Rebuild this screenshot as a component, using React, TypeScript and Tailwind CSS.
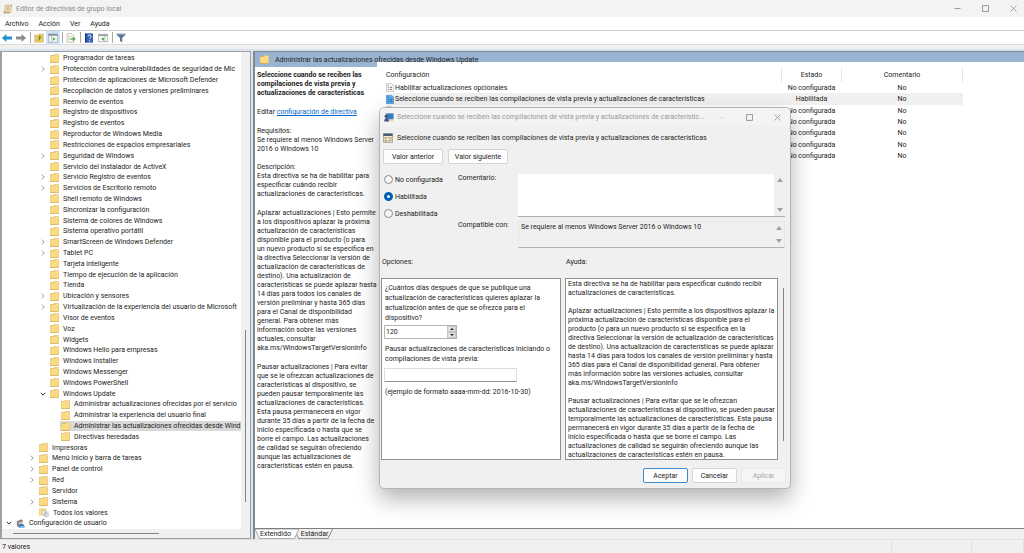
import type { ReactNode } from 'react';

interface TreeItem {
  label: string;
  level: 0 | 1 | 2 | 3;
  state?: 'open' | 'closed';
  icon?: 'folder' | 'all' | 'user';
  selected?: boolean;
}

const treeItems: TreeItem[] = [
  { label: 'Programador de tareas', level: 2 },
  { label: 'Protección contra vulnerabilidades de seguridad de Mic', level: 2, state: 'closed' },
  { label: 'Protección de aplicaciones de Microsoft Defender', level: 2 },
  { label: 'Recopilación de datos y versiones preliminares', level: 2 },
  { label: 'Reenvío de eventos', level: 2 },
  { label: 'Registro de dispositivos', level: 2 },
  { label: 'Registro de eventos', level: 2 },
  { label: 'Reproductor de Windows Media', level: 2 },
  { label: 'Restricciones de espacios empresariales', level: 2 },
  { label: 'Seguridad de Windows', level: 2, state: 'closed' },
  { label: 'Servicio del instalador de ActiveX', level: 2 },
  { label: 'Servicio Registro de eventos', level: 2, state: 'closed' },
  { label: 'Servicios de Escritorio remoto', level: 2, state: 'closed' },
  { label: 'Shell remoto de Windows', level: 2 },
  { label: 'Sincronizar la configuración', level: 2 },
  { label: 'Sistema de colores de Windows', level: 2 },
  { label: 'Sistema operativo portátil', level: 2 },
  { label: 'SmartScreen de Windows Defender', level: 2, state: 'closed' },
  { label: 'Tablet PC', level: 2, state: 'closed' },
  { label: 'Tarjeta inteligente', level: 2 },
  { label: 'Tiempo de ejecución de la aplicación', level: 2 },
  { label: 'Tienda', level: 2 },
  { label: 'Ubicación y sensores', level: 2, state: 'closed' },
  { label: 'Virtualización de la experiencia del usuario de Microsoft', level: 2, state: 'closed' },
  { label: 'Visor de eventos', level: 2 },
  { label: 'Voz', level: 2 },
  { label: 'Widgets', level: 2 },
  { label: 'Windows Hello para empresas', level: 2 },
  { label: 'Windows Installer', level: 2 },
  { label: 'Windows Messenger', level: 2 },
  { label: 'Windows PowerShell', level: 2 },
  { label: 'Windows Update', level: 2, state: 'open' },
  { label: 'Administrar actualizaciones ofrecidas por el servicio', level: 3 },
  { label: 'Administrar la experiencia del usuario final', level: 3 },
  { label: 'Administrar las actualizaciones ofrecidas desde Wind', level: 3, selected: true },
  { label: 'Directivas heredadas', level: 3 },
  { label: 'Impresoras', level: 1 },
  { label: 'Menú Inicio y barra de tareas', level: 1, state: 'closed' },
  { label: 'Panel de control', level: 1, state: 'closed' },
  { label: 'Red', level: 1, state: 'closed' },
  { label: 'Servidor', level: 1 },
  { label: 'Sistema', level: 1, state: 'closed' },
  { label: 'Todos los valores', level: 1, icon: 'all' },
  { label: 'Configuración de usuario', level: 0, state: 'open', icon: 'user' },
];

const indents = {
  0: 'pl-[2px]',
  1: 'pl-[25px]',
  2: 'pl-[36px]',
  3: 'pl-[47px]',
};

const settings = [
  { name: 'Habilitar actualizaciones opcionales', state: 'No configurada' },
  {
    name: 'Seleccione cuando se reciben las compilaciones de vista previa y actualizaciones de características',
    state: 'Habilitada',
    selected: true,
  },
  { name: '', state: 'No configurada' },
  { name: '', state: 'No configurada' },
  { name: '', state: 'No configurada' },
  { name: '', state: 'No configurada' },
  { name: '', state: 'No configurada' },
];

const deferText = `Aplazar actualizaciones | Esto permite
a los dispositivos aplazar la próxima
actualización de características
disponible para el producto (o para
un nuevo producto si se especifica en
la directiva Seleccionar la versión de
actualización de características de
destino). Una actualización de
características se puede aplazar hasta
14 días para todos los canales de
versión preliminar y hasta 365 días
para el Canal de disponibilidad
general. Para obtener más
información sobre las versiones
actuales, consultar
aka.ms/WindowsTargetVersioninfo`;

const pauseText = `Pausar actualizaciones | Para evitar
que se le ofrezcan actualizaciones de
características al dispositivo, se
pueden pausar temporalmente las
actualizaciones de características.
Esta pausa permanecerá en vigor
durante 35 días a partir de la fecha de
inicio especificada o hasta que se
borre el campo. Las actualizaciones
de calidad se seguirán ofreciendo
aunque las actualizaciones de
características estén en pausa.`;

const helpText = `Esta directiva se ha de habilitar para especificar cuándo recibir
actualizaciones de características.

Aplazar actualizaciones | Esto permite a los dispositivos aplazar la
próxima actualización de características disponible para el
producto (o para un nuevo producto si se especifica en la
directiva Seleccionar la versión de actualización de características
de destino). Una actualización de características se puede aplazar
hasta 14 días para todos los canales de versión preliminar y hasta
365 días para el Canal de disponibilidad general. Para obtener
más información sobre las versiones actuales, consultar
aka.ms/WindowsTargetVersioninfo

Pausar actualizaciones | Para evitar que se le ofrezcan
actualizaciones de características al dispositivo, se pueden pausar
temporalmente las actualizaciones de características. Esta pausa
permanecerá en vigor durante 35 días a partir de la fecha de
inicio especificada o hasta que se borre el campo. Las
actualizaciones de calidad se seguirán ofreciendo aunque las
actualizaciones de características estén en pausa.`;

function FolderIcon() {
  return (
    <svg className="w-[9px] h-[9px] shrink-0" viewBox="0 0 9 9" aria-hidden="true">
      <path d="M0 1.2h3.4l.8-.9H8.8V8.6H0z" fill="#dfb659" />
      <path d="M.3 2h3.5l.8-.8H8.4V8H.3z" fill="#fadb84" />
      <path d="M5.4.7h3v1.1h-3z" fill="#f3e3b0" />
      <path d="M0 8.1h8.8v.6H0z" fill="#d6a23e" />
    </svg>
  );
}

function AllSettingsIcon() {
  return (
    <svg className="w-[10px] h-[9px] shrink-0" viewBox="0 0 10 9" aria-hidden="true">
      <path d="M0 .8h7v6.4H0z" fill="#fbdc85" stroke="#e3b859" strokeWidth=".4" />
      <path d="M3.4 2.6h3v4h-3zM5.6 4.2h3.6v4.4H5.6z" fill="#fff" stroke="#999" strokeWidth=".5" />
      <path d="M6.4 5.6h2M6.4 7h2" stroke="#777" strokeWidth=".5" />
    </svg>
  );
}

function UserIcon() {
  return (
    <svg className="w-[9px] h-[9px] shrink-0" viewBox="0 0 9 9" aria-hidden="true">
      <path d="M.8 1.6h2.6v5.8H.8z" fill="#8b8b8b" />
      <circle cx="5" cy="2.2" r="1.7" fill="#6b5a48" />
      <circle cx="5.3" cy="2.8" r="1.1" fill="#e8b98e" />
      <path d="M2.4 8.4c0-3 1.2-4 2.8-4s3.4 1 3.4 4z" fill="#3b78b8" />
      <path d="M4.4 7.2h4.2v1.4H4.4z" fill="#9fc4e6" />
    </svg>
  );
}

function PolicyIcon({ selected }: { selected?: boolean }) {
  return (
    <svg className="w-[8px] h-[9px] shrink-0" viewBox="0 0 8 9" aria-hidden="true">
      <path
        d="M.4.4h5.2l2 1.8v6.4H.4z"
        fill={selected ? '#5aa9ea' : '#f7f7f7'}
        stroke={selected ? '#2f80c8' : '#a8a8a8'}
        strokeWidth=".6"
      />
      <path
        d="M1.8 2.4h1M1.8 4.4h1M1.8 6.4h1M4 4.4h2M4 6.4h2"
        stroke={selected ? '#1f5f9e' : '#555'}
        strokeWidth=".8"
      />
    </svg>
  );
}

function ScrollIcon() {
  return (
    <svg className="w-[10px] h-[10px]" viewBox="0 0 10 10" aria-hidden="true">
      <path d="M2.4 1h6.4L7.6 8.8H1z" fill="#f0e2bd" stroke="#b39b6b" strokeWidth=".5" />
      <path d="M8 .8c1 0 1.4 1 .6 1.6H7.4zM.6 7.6h5.8v1.6H1.2C.4 9.2.2 8 .6 7.6z" fill="#c7a566" />
      <path d="M3.6 2.8h3M3.4 4.2h3M3.2 5.6h3" stroke="#978560" strokeWidth=".5" />
    </svg>
  );
}

function Caret({ open }: { open: boolean }) {
  return (
    <svg className="w-[6px] h-[6px]" viewBox="0 0 6 6" fill="none" aria-hidden="true">
      {open ? (
        <path d="M.8 1.8 3 4.2 5.2 1.8" stroke="#333" strokeWidth="1" />
      ) : (
        <path d="M1.8.6 4.2 3 1.8 5.4" stroke="#808080" strokeWidth=".8" />
      )}
    </svg>
  );
}

function WindowButtons({ fadedMinimize }: { fadedMinimize?: boolean }) {
  return (
    <div className="flex gap-[21px]">
      <button type="button" aria-label="Minimizar" className="w-[7px] flex items-center justify-center">
        <svg className="w-[7px] h-[7px]" viewBox="0 0 7 7" aria-hidden="true">
          <path d="M.5 3.5h6" stroke={fadedMinimize ? '#dcdcdc' : '#909090'} strokeWidth=".9" />
        </svg>
      </button>
      <button type="button" aria-label="Maximizar" className="w-[7px] flex items-center justify-center">
        <svg className="w-[7px] h-[7px]" viewBox="0 0 7 7" aria-hidden="true">
          <rect x=".6" y=".6" width="5.8" height="5.8" fill="none" stroke="#909090" strokeWidth=".9" />
        </svg>
      </button>
      <button type="button" aria-label="Cerrar" className="w-[7px] flex items-center justify-center">
        <svg className="w-[7px] h-[7px]" viewBox="0 0 7 7" aria-hidden="true">
          <path d="M.5.5l6 6M6.5.5l-6 6" stroke="#909090" strokeWidth=".8" />
        </svg>
      </button>
    </div>
  );
}

function ToolButton({ label, active, children }: { label: string; active?: boolean; children: ReactNode }) {
  return (
    <button
      type="button"
      aria-label={label}
      className={`w-[14px] h-[13px] flex items-center justify-center ${active ? 'bg-[#cce4f7]' : ''}`}
    >
      <svg className="w-[10px] h-[10px]" viewBox="0 0 10 10" aria-hidden="true">
        {children}
      </svg>
    </button>
  );
}

function ToolSeparator() {
  return <span className="w-px h-[11px] ml-[2px] mr-px bg-[#a8a8a8]" />;
}

function Toolbar() {
  return (
    <div className="h-[14px] flex items-center bg-white border-b border-[#dcdcdc]">
      <ToolButton label="Atrás">
        <path d="M0 5 4.4 1v2.4H10v3.2H4.4V9z" fill="#1e8fd5" />
      </ToolButton>
      <ToolButton label="Adelante">
        <path d="M10 5 5.6 1v2.4H0v3.2h5.6V9z" fill="#8b8b8b" />
      </ToolButton>
      <ToolSeparator />
      <ToolButton label="Subir un nivel">
        <path d="M.6 2h3.6l1-1h4.2v8.2H.6z" fill="#ecc868" stroke="#c9a24a" strokeWidth=".4" />
        <path d="M3.2 7.4c1.4-.4 2-1.4 2-2.8H4L5.8 2.4l1.8 2.2H6.4c0 2-1 3.2-3.2 2.8z" fill="#3f9a3a" />
      </ToolButton>
      <ToolButton label="Mostrar árbol" active>
        <path d="M.4 1h9.2v8.2H.4z" fill="#f5f7f9" stroke="#8796a5" strokeWidth=".6" />
        <path d="M.4 1h9.2v1.8H.4z" fill="#8796a5" />
        <path d="M3.4 2.8v6.4" stroke="#8796a5" strokeWidth=".5" />
        <path d="M4.8 4.2 7.6 6 4.8 7.8z" fill="#4aa544" />
      </ToolButton>
      <ToolSeparator />
      <ToolButton label="Exportar lista">
        <path d="M1 .6h5l1.8 1.8v7H1z" fill="#faf8ee" stroke="#a8a28c" strokeWidth=".6" />
        <path d="M2.2 3.4h3.4M2.2 5h2M2.2 6.6h2" stroke="#a8a8a8" strokeWidth=".5" />
        <path d="M4.6 5.2h2.2V3.6L9.8 6 6.8 8.4V6.8H4.6z" fill="#55b04a" />
      </ToolButton>
      <ToolSeparator />
      <ToolButton label="Ayuda">
        <path d="M1 .4h8v9.2H1z" fill="#2f62b4" />
        <path d="M1 .4h1.4v9.2H1z" fill="#163b7a" />
        <path d="M4 3.6c0-2 3.2-2 3.2 0 0 1.2-1.5 1.2-1.5 2.4M5.6 7.2v1.2" stroke="#fff" strokeWidth="1" fill="none" />
      </ToolButton>
      <ToolButton label="Propiedades">
        <path d="M.4 1.4h9.2v7.4H.4z" fill="#fafafa" stroke="#8b8b8b" strokeWidth=".6" />
        <path d="M.4 1.4h9.2V3H.4z" fill="#9a9a9a" />
        <path d="M6.8 3v5.8" stroke="#8b8b8b" strokeWidth=".5" />
        <path d="M5.8 4.2 3 6l2.8 1.8z" fill="#4aa544" />
      </ToolButton>
      <ToolSeparator />
      <ToolButton label="Filtro">
        <path d="M.6.8h8.8v1L6.2 5v4.4L4 8V5L.6 1.8z" fill="#5d7896" />
        <path d="M.6.8h8.8v1H.6z" fill="#8ea5bd" />
      </ToolButton>
    </div>
  );
}

function TreePanel() {
  return (
    <nav
      aria-label="Árbol de directivas"
      className="w-[251px] shrink-0 flex flex-col bg-[#f0f0f0] border border-l-2 border-[#a0a0a0]"
    >
      <div className="flex-1 min-h-0 flex">
        <ul className="flex-1 min-w-0 flex flex-col pt-px bg-white">
          {treeItems.map((item) => (
            <li key={item.label} className={`flex-1 min-h-0 flex items-center ${indents[item.level]}`}>
              <span className="w-[11px] shrink-0 flex items-center pl-[2px]">
                {item.state && <Caret open={item.state === 'open'} />}
              </span>
              <span
                className={`h-full min-w-0 flex-1 flex items-center gap-[4px] pl-px ${item.selected ? 'bg-[#d9d9d9]' : ''}`}
              >
                {item.icon === 'user' ? <UserIcon /> : item.icon === 'all' ? <AllSettingsIcon /> : <FolderIcon />}
                <span className="whitespace-nowrap">{item.label}</span>
              </span>
            </li>
          ))}
        </ul>
        <div className="w-[9px] flex flex-col items-center">
          <div className="flex-[279]" />
          <div className="flex-[172] w-px bg-[#858585]" />
          <div className="flex-[27]" />
        </div>
      </div>
      <div className="h-[9px] flex items-center pl-[11px]">
        <div className="w-[146px] h-px bg-[#858585]" />
      </div>
    </nav>
  );
}

function SettingsTable() {
  return (
    <table className="w-[577px] table-fixed border-collapse h-[94px]">
      <thead>
        <tr className="h-[14px]">
          <th className="font-normal text-left p-0 border-r border-[#e5e5e5]">Configuración</th>
          <th className="w-[60px] font-normal p-0 border-r border-[#e5e5e5]">Estado</th>
          <th className="w-[121px] font-normal p-0 border-r border-[#e5e5e5]">Comentario</th>
        </tr>
      </thead>
      <tbody>
        {settings.map((row, i) => (
          <tr key={i} className={row.selected ? 'bg-[#f0f0f0]' : ''}>
            <td className="p-0">
              <div className="flex items-center gap-px">
                <PolicyIcon selected={row.selected} />
                <span className="whitespace-nowrap">{row.name}</span>
              </div>
            </td>
            <td className="p-0 text-center whitespace-nowrap">{row.state}</td>
            <td className="p-0 text-center">No</td>
          </tr>
        ))}
      </tbody>
    </table>
  );
}

function DetailsPanel() {
  return (
    <main className="flex-1 min-w-0 flex flex-col border-l-2 border-t border-[#808890]">
      <div className="flex-1 min-h-0 flex flex-col bg-white">
        <div className="h-[15px] shrink-0 flex items-center gap-[6px] pl-[5px] bg-[#99b4d1]">
          <FolderIcon />
          <h1 className="relative z-10">Administrar las actualizaciones ofrecidas desde Windows Update</h1>
        </div>
        <div className="flex-1 min-h-0 flex">
          <section className="w-[122px] shrink-0 pl-[2px] pt-[4px] leading-[9px] whitespace-pre">
            <h2 className="font-bold mb-[10px]">
              {'Seleccione cuando se reciben las\ncompilaciones de vista previa y\nactualizaciones de características'}
            </h2>
            <p className="mb-[10px]">
              Editar <a href="#directiva" className="text-[#0066cc] underline">configuración de directiva</a>
            </p>
            <p className="mb-[9px]">{'Requisitos:\nSe requiere al menos Windows Server\n2016 o Windows 10'}</p>
            <p className="mb-[10px]">
              {'Descripción:\nEsta directiva se ha de habilitar para\nespecificar cuándo recibir\nactualizaciones de características.'}
            </p>
            <p className="mb-[10px]">{deferText}</p>
            <p>{pauseText}</p>
          </section>
          <section className="flex-1 min-w-0 -mt-[5px] pt-[6px] pl-[9px] bg-white">
            <SettingsTable />
          </section>
        </div>
      </div>
      <div className="h-[11px] flex bg-[#f0f0f0] border-t border-[#808080] leading-[10px]">
        <button type="button" className="relative w-[41px]">
          <svg className="absolute left-0 top-0 w-[44px] h-[10px]" viewBox="0 0 44 10" aria-hidden="true">
            <path d="M0 0l4.5 9.6h35L44 0z" fill="#fff" stroke="#808080" strokeWidth=".7" />
          </svg>
          <span className="relative">Extendido</span>
        </button>
        <button type="button" className="relative w-[37px]">
          <svg className="absolute left-0 top-0 w-[37px] h-[10px]" viewBox="0 0 37 10" aria-hidden="true">
            <path d="M.6 5.6l2 4h29.4L36.6 0" fill="none" stroke="#606060" strokeWidth=".7" />
          </svg>
          <span className="relative">Estándar</span>
        </button>
      </div>
    </main>
  );
}

function ScrollArrows() {
  return (
    <div className="w-[11px] flex flex-col justify-between items-center py-[4px] bg-[#f0f0f0]">
      <svg className="w-[6px] h-[4px]" viewBox="0 0 6 4" aria-hidden="true">
        <path d="M3 0 6 4H0z" fill="#a0a0a0" />
      </svg>
      <svg className="w-[6px] h-[4px]" viewBox="0 0 6 4" aria-hidden="true">
        <path d="M3 4 6 0H0z" fill="#a0a0a0" />
      </svg>
    </div>
  );
}

function RadioOption({ label, checked }: { label: string; checked?: boolean }) {
  return (
    <label className="h-[17px] flex items-center gap-[2px]">
      <input
        type="radio"
        name="estado"
        defaultChecked={checked}
        className="appearance-none w-[9px] h-[9px] rounded-full border border-[#8a8a8a] bg-[#f6f6f6] checked:border-[3px] checked:border-[#005fb8] checked:bg-white"
      />
      {label}
    </label>
  );
}

const buttonStyle = 'h-[15px] rounded-[2px] border border-[#d5d5d5] bg-[#fdfdfd]';

function PolicyDialog() {
  return (
    <div
      role="dialog"
      aria-labelledby="dialog-title"
      className="absolute left-[379px] top-[107px] w-[412px] flex flex-col rounded-[5px] border border-[#b4b4b4] bg-[#f0f0f0] shadow-[0_10px_22px_rgba(0,0,0,0.3)] overflow-hidden"
    >
      {/* Title bar */}
      <div className="h-[18px] flex justify-between pr-[9px] bg-[#f3f3f3] text-[#999]">
        <div className="flex items-center gap-[3px] pl-[4px]">
          <svg className="w-[10px] h-[9px]" viewBox="0 0 10 9" aria-hidden="true">
            <path d="M2 .4h7.4v5.8H2z" fill="#2f7fd0" stroke="#7d8ea0" strokeWidth=".5" />
            <path d="M5.4 6.4h2.4v1.2H5.4z" fill="#999" />
            <circle cx="2" cy="3.4" r="1.4" fill="#5a4632" />
            <path d="M.2 8.6c0-2.6 1-3.4 2.2-3.4S5 6 5 8.6z" fill="#3d4f9a" />
            <path d="M5.6 6.4h4v2.2h-4z" fill="#f2d9a0" />
          </svg>
          <h2 id="dialog-title" className="whitespace-nowrap">
            Seleccione cuando se reciben las compilaciones de vista previa y actualizaciones de característic...
          </h2>
        </div>
        <WindowButtons fadedMinimize />
      </div>

      {/* Policy name and navigation */}
      <div className="h-[24px] flex items-center gap-[4px] pl-[3px]">
        <svg className="w-[10px] h-[10px]" viewBox="0 0 10 10" aria-hidden="true">
          <path d="M.4.8h9.2v8.6H.4z" fill="#f1ead8" stroke="#77746c" strokeWidth=".6" />
          <path d="M.4.6h9.2v2.4H.4z" fill="#4a6178" />
          <path d="M1.6 4.2h2v1.6h-2zM1.6 7h2v1.4h-2z" fill="#a08a58" />
          <path d="M4.6 5h4M4.6 7.6h4" stroke="#8b8b8b" strokeWidth=".7" />
          <path d="M6.6 4h2.6v2.6H6.6z" fill="#d9b766" />
        </svg>
        <p className="whitespace-nowrap">
          Seleccione cuando se reciben las compilaciones de vista previa y actualizaciones de características
        </p>
      </div>
      <div className="flex gap-[5px] pl-[3px] -mt-px">
        <button type="button" className={`w-[60px] ${buttonStyle}`}>Valor anterior</button>
        <button type="button" className={`w-[60px] ${buttonStyle}`}>Valor siguiente</button>
      </div>

      {/* State, comment and supported platforms */}
      <div className="flex pt-[10px] pl-[4px] pr-[5px]">
        <div className="w-[74px] -mt-[3px]">
          <RadioOption label="No configurada" />
          <RadioOption label="Habilitada" checked />
          <RadioOption label="Deshabilitada" />
        </div>
        <div className="flex-1 flex flex-col gap-[4px]">
          <div className="flex">
            <label htmlFor="comment" className="w-[60px] leading-[8px]">Comentario:</label>
            <div className="flex-1 h-[43px] flex border-b border-[#b0b0b0]">
              <textarea id="comment" className="flex-1 resize-none bg-white outline-none" />
              <ScrollArrows />
            </div>
          </div>
          <div className="flex">
            <label htmlFor="supported" className="w-[60px] leading-[8px]">Compatible con:</label>
            <div className="flex-1 h-[27px] flex border border-t-[#e6e6e6] border-x-[#e6e6e6] border-b-[#b0b0b0]">
              <textarea
                id="supported"
                readOnly
                className="flex-1 resize-none bg-transparent outline-none px-[2px] pt-px leading-[9px]"
                defaultValue="Se requiere al menos Windows Server 2016 o Windows 10"
              />
              <ScrollArrows />
            </div>
          </div>
        </div>
      </div>

      {/* Options and help */}
      <div className="grid grid-cols-[184px_1fr] pl-px pt-[9px]">
        <h3 className="h-[21px] pl-px">Opciones:</h3>
        <h3 className="h-[21px] pl-px">Ayuda:</h3>
        <div className="w-[180px] h-[182px] border border-[#909090] bg-white px-[3px] pt-[4px] leading-[10px]">
          <label htmlFor="days" className="block whitespace-pre">
            {'¿Cuántos días después de que se publique una\nactualización de características quieres aplazar la\nactualización antes de que se ofrezca para el\ndispositivo?'}
          </label>
          <div className="w-[73px] h-[14px] -ml-px mt-[2px] flex border border-[#b4b4b4]">
            <input id="days" type="text" defaultValue="120" className="flex-1 min-w-0 outline-none pl-px" />
            <div className="w-[9px] flex flex-col bg-[#e2e2e2]">
              <button type="button" aria-label="Aumentar" className="flex-1 flex items-center justify-center border border-[#c4c4c4]">
                <svg className="w-[4px] h-[2px]" viewBox="0 0 4 2" aria-hidden="true"><path d="M2 0 4 2H0z" fill="#222" /></svg>
              </button>
              <button type="button" aria-label="Disminuir" className="flex-1 flex items-center justify-center border border-[#c4c4c4]">
                <svg className="w-[4px] h-[2px]" viewBox="0 0 4 2" aria-hidden="true"><path d="M2 2 4 0H0z" fill="#222" /></svg>
              </button>
            </div>
          </div>
          <label htmlFor="pause" className="block whitespace-pre mt-[5px]">
            {'Pausar actualizaciones de características iniciando o\ncompilaciones de vista previa:'}
          </label>
          <input
            id="pause"
            type="text"
            className="block w-[133px] h-[14px] -ml-px mt-[4px] border border-[#dedede] border-b-[#909090] outline-none"
          />
          <p className="mt-[5px]">(ejemplo de formato aaaa-mm-dd: 2016-10-30)</p>
        </div>
        <div className="flex">
          <p className="w-[213px] h-[182px] border border-[#909090] bg-white pl-[2px] pt-px leading-[9px] whitespace-pre overflow-hidden">
            {helpText}
          </p>
          <div className="flex-1 pl-[5px] pt-[10px]">
            <div className="w-px h-[153px] bg-[#858585]" />
          </div>
        </div>
      </div>

      {/* Footer */}
      <div className="flex justify-end gap-[4px] pt-[8px] pb-[5px] pr-[4px]">
        <button type="button" className="w-[45px] h-[15px] rounded-[2px] border border-[#3d8ad0] bg-[#fdfdfd]">
          Aceptar
        </button>
        <button type="button" className={`w-[45px] ${buttonStyle}`}>Cancelar</button>
        <button
          type="button"
          disabled
          className="w-[45px] h-[15px] rounded-[2px] border border-[#e9e9e9] bg-[#f5f5f5] text-[#a8a8a8]"
        >
          Aplicar
        </button>
      </div>
    </div>
  );
}

export default function App() {
  return (
    <div className="relative h-screen flex flex-col overflow-hidden bg-[#f0f0f0] font-['Roboto',sans-serif] text-[7px] leading-[10px] text-[#1c1c1c]">
      <header className="h-[17px] flex justify-between pr-[7px] bg-[#f3f3f3] text-[#8a8a8a]">
        <div className="flex items-center gap-[3px] pl-[3px]">
          <ScrollIcon />
          <span>Editor de directivas de grupo local</span>
        </div>
        <WindowButtons />
      </header>
      <div className="h-[14px] flex items-center gap-[10px] pl-[5px] bg-white border-b border-[#cfcfcf]">
        <button type="button">Archivo</button>
        <button type="button">Acción</button>
        <button type="button">Ver</button>
        <button type="button">Ayuda</button>
      </div>
      <Toolbar />
      <div className="flex-1 min-h-0 mt-[4px] pt-[2px] flex gap-[2px] bg-[#d9e4ee]">
        <TreePanel />
        <DetailsPanel />
      </div>
      <footer className="h-[14px] flex items-center border-t border-[#e0e0e0] pl-[2px]">
        <span className="flex-1">7 valores</span>
        <span className="w-[80px] h-full border-l border-[#e0e0e0]" />
        <span className="w-[53px] h-full border-x border-[#e0e0e0]" />
      </footer>
      <PolicyDialog />
    </div>
  );
}
